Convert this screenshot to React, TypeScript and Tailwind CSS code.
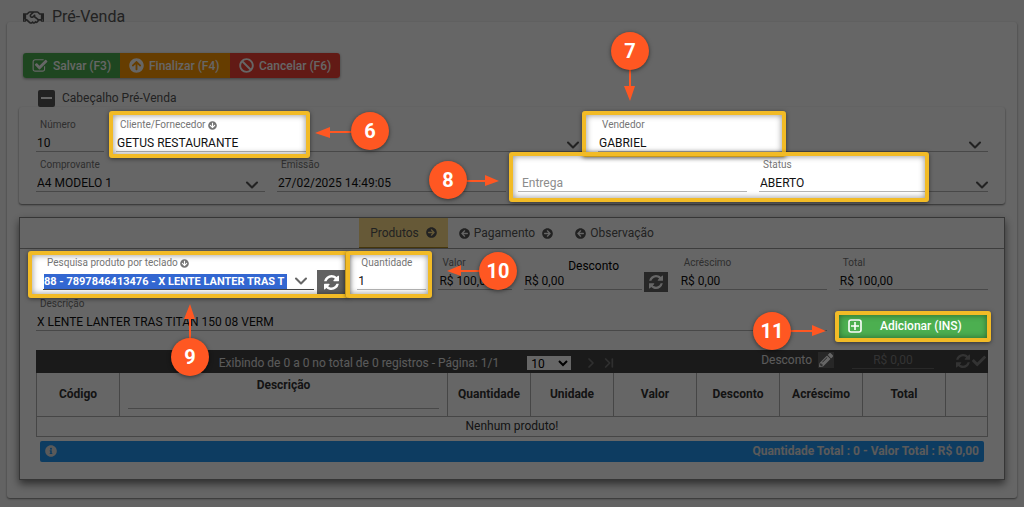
import type { ReactNode } from "react";
import {
  FaArrowCircleDown,
  FaArrowCircleLeft,
  FaArrowCircleRight,
  FaArrowCircleUp,
  FaBan,
  FaCheck,
  FaInfoCircle,
  FaPencilAlt,
  FaRegHandshake,
} from "react-icons/fa";
import { ChevronDown, ChevronLast, ChevronRight } from "lucide-react";

/* ── Icons ── */

function CheckSquareIcon({ className }: { className?: string }) {
  return (
    <svg viewBox="0 0 1792 1792" fill="currentColor" className={className} aria-hidden="true">
      <path d="M1472 930v318q0 119-84.5 203.5t-203.5 84.5h-832q-119 0-203.5-84.5t-84.5-203.5v-832q0-119 84.5-203.5t203.5-84.5h832q63 0 117 25 15 7 18 23 3 17-9 29l-49 49q-10 10-23 10-3 0-9-2-23-6-45-6h-832q-66 0-113 47t-47 113v832q0 66 47 113t113 47h832q66 0 113-47t47-113v-254q0-13 9-22l64-64q10-10 23-10 6 0 12 3 20 8 20 29zm231-489l-814 814q-24 24-57 24t-57-24l-430-430q-24-24-24-57t24-57l110-110q24-24 57-24t57 24l263 263 647-647q24-24 57-24t57 24l110 110q24 24 24 57t-24 57z" />
    </svg>
  );
}

function RefreshIcon({ className }: { className?: string }) {
  return (
    <svg viewBox="128 128 1536 1536" fill="currentColor" className={className} aria-hidden="true">
      <path d="M1639 1056q0 5-1 7-64 268-268 434.5t-478 166.5q-146 0-282.5-55t-243.5-157l-129 129q-19 19-45 19t-45-19-19-45v-448q0-26 19-45t45-19h448q26 0 45 19t19 45-19 45l-137 137q71 66 161 102t187 36q134 0 250-65t186-179q11-17 53-117 8-23 30-23h192q13 0 22.5 9.5t9.5 22.5zm25-800v448q0 26-19 45t-45 19h-448q-26 0-45-19t-19-45 19-45l138-138q-148-137-349-137-134 0-250 65t-186 179q-11 17-53 117-8 23-30 23h-199q-13 0-22.5-9.5t-9.5-22.5v-7q65-268 270-434.5t480-166.5q146 0 284 55.5t245 156.5l130-129q19-19 45-19t45 19 19 45z" />
    </svg>
  );
}

function PlusBoxIcon({ className }: { className?: string }) {
  return (
    <svg viewBox="0 0 14 14" fill="none" stroke="currentColor" className={className} aria-hidden="true">
      <rect x="1" y="1" width="12" height="12" rx="2" strokeWidth="1.6" />
      <path d="M7 3v8M3 7h8" strokeWidth="1.6" />
    </svg>
  );
}

/* ── Form fields ── */

type FieldProps = {
  id: string;
  label: string;
  value: string;
  icon?: ReactNode;
};

function FieldLabel({ id, label, icon }: { id: string; label: string; icon?: ReactNode }) {
  return (
    <label htmlFor={id} className="flex h-3 items-center gap-0.5 pl-1 text-[10px] leading-3 text-[#757575]">
      {label}
      {icon}
    </label>
  );
}

function TextField({ id, label, value, icon }: FieldProps) {
  return (
    <div className="flex min-w-0 flex-col gap-1">
      <FieldLabel id={id} label={label} icon={icon} />
      <input
        id={id}
        defaultValue={value}
        className="h-[17px] w-full border-b border-[#b5b5b5] bg-transparent px-px text-[12px] leading-4 text-[#111] outline-none"
      />
    </div>
  );
}

function SelectField({ id, label, value, icon, tight }: FieldProps & { tight?: boolean }) {
  return (
    <div className="flex min-w-0 flex-col gap-1">
      <FieldLabel id={id} label={label} icon={icon} />
      <div className="relative">
        <select
          id={id}
          className="block h-[17px] w-full appearance-none border-b border-[#b5b5b5] bg-transparent px-px text-[12px] leading-4 text-[#111] outline-none"
        >
          <option>{value}</option>
        </select>
        <ChevronDown
          strokeWidth={2.5}
          className={`pointer-events-none absolute top-0 size-5 text-[#555] ${tight ? "-right-1" : "right-[3px]"}`}
        />
      </div>
    </div>
  );
}

/* ── Header panel ── */

function Toolbar() {
  const base = "flex h-[25px] items-center text-[12px] font-medium text-white";
  return (
    <div className="ml-4 flex w-fit overflow-hidden rounded-[3px] shadow-[0_1px_3px_rgba(0,0,0,0.4)]">
      <button className={`${base} w-[97px] gap-[5px] bg-[#4caf50] pl-[9px]`}>
        <CheckSquareIcon className="size-4" />
        Salvar (F3)
      </button>
      <button className={`${base} w-[110px] gap-[5px] bg-[#ff9800] pl-[9px]`}>
        <FaArrowCircleUp className="size-[15px]" />
        Finalizar (F4)
      </button>
      <button className={`${base} w-[110px] gap-[5px] bg-[#f44336] pl-[9px]`}>
        <FaBan className="size-[15px]" />
        Cancelar (F6)
      </button>
    </div>
  );
}

function SaleHeader() {
  return (
    <section className="mx-3 mt-[11px]">
      <div className="flex h-[18px] items-center gap-[7px] pl-[19px] text-[12px] text-[#555]">
        <button aria-label="Recolher" className="flex size-[17px] items-center justify-center rounded-xs bg-[#555]">
          <span className="h-0.5 w-[11px] bg-white" />
        </button>
        <h2>Cabeçalho Pré-Venda</h2>
      </div>
      <div className="flex flex-col gap-[7px] rounded-[3px] px-[17px] pt-3 pb-3 shadow-[0_1px_2px_rgba(0,0,0,0.55)]">
        <div className="grid grid-cols-[68fr_470fr_390fr] gap-3">
          <TextField id="numero" label="Número" value="10" />
          <SelectField
            id="cliente"
            label="Cliente/Fornecedor"
            value="GETUS RESTAURANTE"
            icon={<FaArrowCircleDown className="size-[9px]" />}
          />
          <SelectField id="vendedor" label="Vendedor" value="GABRIEL" />
        </div>
        <div className="grid grid-cols-4 gap-3">
          <SelectField id="comprovante" label="Comprovante" value="A4 MODELO 1" />
          <TextField id="emissao" label="Emissão" value="27/02/2025 14:49:05" />
          <div className="flex items-end">
            <input
              aria-label="Entrega"
              placeholder="Entrega"
              className="h-[17px] w-full border-b border-[#b5b5b5] bg-transparent px-1 text-[12px] leading-4 outline-none placeholder:text-[#8c8c8c]"
            />
          </div>
          <SelectField id="status" label="Status" value="ABERTO" tight />
        </div>
      </div>
    </section>
  );
}

/* ── Products panel ── */

function Tabs() {
  return (
    <nav className="flex h-[31px] justify-center border-b border-[#999] text-[12px] text-[#555]">
      <button className="flex items-center gap-[7px] border-b border-[#b08a20] bg-[#ffdf8a] px-[11px]">
        Produtos
        <FaArrowCircleRight className="size-[11px]" />
      </button>
      <button className="flex items-center gap-[7px] px-[11px]">
        <span className="flex items-center gap-1">
          <FaArrowCircleLeft className="size-[11px]" />
          Pagamento
        </span>
        <FaArrowCircleRight className="size-[11px]" />
      </button>
      <button className="flex items-center gap-1 px-[11px]">
        <FaArrowCircleLeft className="size-[11px]" />
        Observação
      </button>
    </nav>
  );
}

function ProductForm() {
  return (
    <div className="flex flex-col gap-2">
      <div className="grid grid-cols-[309fr_69fr_73fr_144fr_147fr_149fr] gap-3">
        <div className="flex min-w-0 items-end gap-[3px] pl-[7px]">
          <div className="flex min-w-0 flex-1 flex-col gap-1">
            <FieldLabel
              id="pesquisa"
              label="Pesquisa produto por teclado"
              icon={<FaArrowCircleDown className="size-[9px]" />}
            />
            <div className="flex h-[17px] items-center border-b border-[#444]">
              <input
                id="pesquisa"
                defaultValue="88 - 7897846413476 - X LENTE LANTER TRAS T"
                className="ml-px h-[15px] min-w-0 flex-1 bg-[#3367d1] text-[11px] leading-[15px] font-bold text-white outline-none"
              />
              <ChevronDown strokeWidth={2.5} className="mr-[3px] ml-1 size-5 shrink-0 text-[#666]" />
            </div>
          </div>
          <button
            aria-label="Atualizar produto"
            className="-mb-1 flex h-6 w-7 shrink-0 items-center justify-center bg-[#616161] text-white"
          >
            <RefreshIcon className="size-[15px]" />
          </button>
        </div>
        <TextField id="quantidade" label="Quantidade" value="1" />
        <TextField id="valor" label="Valor" value="R$ 100,00" />
        <div className="flex min-w-0 flex-col">
          <label htmlFor="desconto" className="mt-0.5 h-[14px] pr-1 text-center text-[12px] leading-[14px] text-black">
            Desconto
          </label>
          <div className="flex h-[17px] items-end gap-0.5">
            <input
              id="desconto"
              defaultValue="R$ 0,00"
              className="h-[17px] min-w-0 flex-1 border-b border-[#b5b5b5] bg-transparent px-px text-[12px] leading-4 text-[#111] outline-none"
            />
            <button
              aria-label="Alternar desconto"
              className="-mb-0.5 flex h-5 w-6 shrink-0 items-center justify-center bg-[#616161] text-white"
            >
              <RefreshIcon className="size-[14px]" />
            </button>
          </div>
        </div>
        <TextField id="acrescimo" label="Acréscimo" value="R$ 0,00" />
        <TextField id="total" label="Total" value="R$ 100,00" />
      </div>
      <div className="grid grid-cols-[790fr_149fr] gap-3">
        <TextField id="descricao" label="Descrição" value="X LENTE LANTER TRAS TITAN 150 08 VERM" />
        <button className="mt-4 -mb-[7px] flex h-6 items-center bg-[#4caf50] pl-[9px] text-[12px] font-medium text-white">
          <PlusBoxIcon className="size-[14px]" />
          <span className="flex-1 pr-6 pl-4 text-center">Adicionar (INS)</span>
        </button>
      </div>
    </div>
  );
}

function Pager() {
  return (
    <div className="flex h-[23px] items-center bg-[#424242] text-[12px] text-[#e0e0e0]">
      <span className="min-w-0 flex-1 pt-0.5 pr-7 text-right">
        Exibindo de 0 a 0 no total de 0 registros - Página: 1/1
      </span>
      <select
        aria-label="Registros por página"
        className="mt-0.5 mr-3 h-[14px] w-11 bg-white text-[12px] leading-[14px] text-black"
      >
        <option>10</option>
      </select>
      <button aria-label="Próxima página" className="pt-0.5 text-[#777]">
        <ChevronRight strokeWidth={2.5} className="size-4" />
      </button>
      <button aria-label="Última página" className="ml-0.5 pt-0.5 text-[#777]">
        <ChevronLast strokeWidth={2.5} className="size-4" />
      </button>
      <div className="ml-36 flex h-full items-start gap-1.5 pt-0.5">
        <label htmlFor="desconto-geral" className="leading-4">
          Desconto
        </label>
        <button aria-label="Editar desconto" className="flex size-4 items-center justify-center bg-[#616161] text-white">
          <FaPencilAlt className="size-[14px]" />
        </button>
        <input
          id="desconto-geral"
          defaultValue="R$ 0,00"
          className="ml-3 h-[17px] w-[82px] border-b border-[#666] bg-transparent text-center text-[12px] text-[#808080] outline-none"
        />
        <div className="ml-4 flex h-[17px] items-center gap-0.5 pr-0.5 text-[#808080]">
          <button aria-label="Atualizar desconto">
            <RefreshIcon className="size-[14px]" />
          </button>
          <button aria-label="Confirmar desconto">
            <FaCheck className="size-[14px]" />
          </button>
        </div>
      </div>
    </div>
  );
}

const COLUMNS = ["Quantidade", "Unidade", "Valor", "Desconto", "Acréscimo", "Total"];

function ProductTable() {
  const cell = "border border-[#b0b0b0]";
  return (
    <table className="w-full table-fixed border-collapse text-[12px] text-[#333]">
      <colgroup>
        <col className="w-[83px]" />
        <col />
        {COLUMNS.map((name) => (
          <col key={name} className="w-[83px]" />
        ))}
        <col className="w-[42px]" />
      </colgroup>
      <thead>
        <tr className="h-[43px]">
          <th className={`${cell} border-t-0 font-bold`}>Código</th>
          <th className={`${cell} border-t-0 px-2 align-top font-bold`}>
            <label htmlFor="filtro" className="block pt-1 leading-4">
              Descrição
            </label>
            <input id="filtro" className="block h-4 w-full border-b border-[#b5b5b5] bg-transparent outline-none" />
          </th>
          {COLUMNS.map((name) => (
            <th key={name} className={`${cell} border-t-0 font-bold`}>
              {name}
            </th>
          ))}
          <th className={`${cell} border-t-0`} />
        </tr>
      </thead>
      <tbody>
        <tr className="h-5">
          <td colSpan={9} className={`${cell} text-center leading-4`}>
            Nenhum produto!
          </td>
        </tr>
      </tbody>
    </table>
  );
}

/* ── Guide layer: dimmed page, lit boxes and numbered callouts ── */

const BOXES = [
  "left-[109px] top-[111px] h-[47px] w-[201px]",
  "left-[582px] top-[111px] h-[46px] w-[204px]",
  "left-[509px] top-[152px] h-[50px] w-[420px]",
  "left-[28px] top-[251px] h-[47px] w-[321px]",
  "left-[346px] top-[251px] h-[47px] w-[86px]",
  "left-[835px] top-[311px] h-[31px] w-[156px]",
];

const CALLOUTS = [
  { n: 6, pos: "left-[351px] top-[112px]" },
  { n: 7, pos: "left-[611px] top-[32px]" },
  { n: 8, pos: "left-[429px] top-[161px]" },
  { n: 9, pos: "left-[171px] top-[338px]" },
  { n: 10, pos: "left-[479px] top-[252px]" },
  { n: 11, pos: "left-[753px] top-[312px]" },
];

const ARROWS = [
  { line: "M352 132H328", head: "M315 133l15-6v11z" },
  { line: "M630 69V88", head: "M630 101l-6-15h11z" },
  { line: "M466 181H486", head: "M499 181l-14-6v11z" },
  { line: "M190 339V318", head: "M190 304l-6 15h11z" },
  { line: "M480 271H460", head: "M447 271l14-6v11z" },
  { line: "M790 331H812", head: "M826 331l-14-6v11z" },
];

function Guide() {
  return (
    <div className="pointer-events-none absolute inset-0 overflow-hidden">
      <div className="absolute inset-0 bg-black/60 [clip-path:path(evenodd,'M0_0H9000V9000H0Z_M111_113H308V156H111Z_M584_113H784V154H927V200H511V154H584Z_M30_253H430V296H30Z_M837_313H989V340H837Z')]" />
      {BOXES.map((box) => (
        <div
          key={box}
          className={`absolute rounded-[3px] border-4 border-[#f2bb26] shadow-[0_1px_4px_rgba(0,0,0,0.5),inset_0_0_6px_rgba(0,0,0,0.45)] ${box}`}
        />
      ))}
      <svg width="1024" height="507" className="absolute top-0 left-0" aria-hidden="true">
        {ARROWS.map((arrow) => (
          <g key={arrow.line}>
            <path d={arrow.line} stroke="#ff5722" strokeWidth="2" />
            <path d={arrow.head} fill="#ff5722" />
          </g>
        ))}
      </svg>
      {CALLOUTS.map(({ n, pos }) => (
        <span
          key={n}
          className={`absolute flex size-[38px] items-center justify-center rounded-full bg-[#ff5722] text-[20px] font-bold text-white shadow-[0_1px_4px_rgba(0,0,0,0.5)] ${pos}`}
        >
          {n}
        </span>
      ))}
    </div>
  );
}

export default function App() {
  return (
    <div className="relative min-h-screen bg-[#f7f7f7] px-[7px] pb-2 font-[Roboto,sans-serif]">
      <header className="relative flex h-[22px] items-center gap-2 pt-3 pl-4 text-[#555]">
        <FaRegHandshake className="size-[21px]" />
        <h1 className="text-[16px] leading-5">Pré-Venda</h1>
      </header>
      <main className="rounded-[3px] bg-white pt-[31px] pb-[18px] shadow-[0_1px_2px_rgba(0,0,0,0.5)]">
        <Toolbar />
        <SaleHeader />
        <section className="mx-3 mt-[13px] border border-[#888] bg-white pb-[17px] shadow-[0_4px_8px_rgba(0,0,0,0.55)]">
          <Tabs />
          <div className="px-4 pt-2">
            <ProductForm />
            <div className="mt-[19px]">
              <Pager />
              <ProductTable />
            </div>
            <div className="mx-1 mt-1 flex h-[21px] items-center justify-between rounded-xs bg-[#2196f3] px-[5px] text-[12px] font-bold text-[#e0e0e0]">
              <FaInfoCircle className="size-3" />
              <span>Quantidade Total : 0 - Valor Total : R$ 0,00</span>
            </div>
          </div>
        </section>
      </main>
      <Guide />
    </div>
  );
}
